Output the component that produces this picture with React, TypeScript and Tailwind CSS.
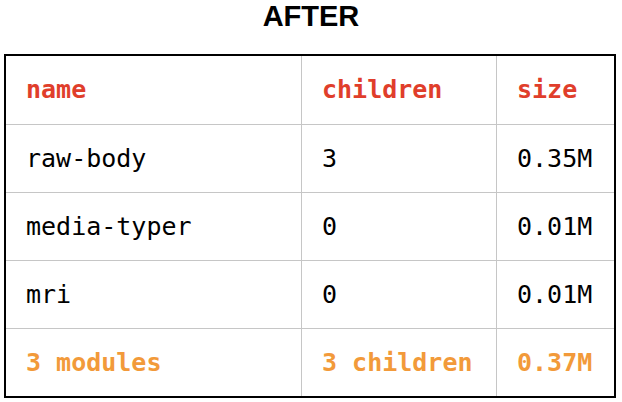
const mono = "font-['DejaVu_Sans_Mono',monospace]";

const rows = [
  { name: "raw-body", children: "3", size: "0.35M" },
  { name: "media-typer", children: "0", size: "0.01M" },
  { name: "mri", children: "0", size: "0.01M" },
];

function Row({
  cells,
  className,
  height,
  last,
}: {
  cells: string[];
  className: string;
  height: string;
  last?: boolean;
}) {
  return (
    <div className={`flex ${height} ${last ? "" : "border-b border-[#c6c6c6]"}`}>
      <div className={`w-[296px] border-r border-[#c6c6c6] flex items-center pl-[20px] ${className}`}>
        {cells[0]}
      </div>
      <div className={`w-[195px] border-r border-[#c6c6c6] flex items-center pl-[20px] ${className}`}>
        {cells[1]}
      </div>
      <div className={`flex-1 flex items-center pl-[20px] ${className}`}>{cells[2]}</div>
    </div>
  );
}

export default function App() {
  return (
    <div className="w-[622px] h-[402px] bg-white">
      <div className="h-[54px] text-center font-['Liberation_Sans',Arial,sans-serif] font-bold text-[29px] leading-[33px] text-black">
        AFTER
      </div>
      <div className={`ml-[4px] w-[612px] border-2 border-black ${mono} text-[25px]`}>
        <Row
          cells={["name", "children", "size"]}
          className="font-bold text-[#e03e2b]"
          height="h-[69px]"
        />
        {rows.map((r) => (
          <Row
            key={r.name}
            cells={[r.name, r.children, r.size]}
            className="text-black"
            height="h-[68px]"
          />
        ))}
        <Row
          cells={["3 modules", "3 children", "0.37M"]}
          className="font-bold text-[#f29a3a]"
          height="h-[67px]"
          last
        />
      </div>
    </div>
  );
}
